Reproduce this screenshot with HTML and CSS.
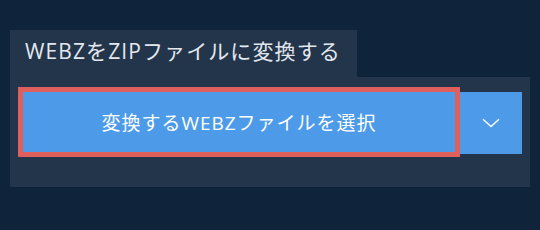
FILE: index.html
```html
<!DOCTYPE html>
<html lang="ja">
<head>
  <meta charset="UTF-8">
  <meta name="viewport" content="width=device-width, initial-scale=1.0">
  <title>WEBZをZIPファイルに変換する</title>
  <link rel="stylesheet" href="styles.css">
</head>
<body>
  <div class="converter">
    <div class="tab">WEBZをZIPファイルに変換する</div>
    <div class="panel">
      <div class="pick-row">
        <button class="pick-btn">変換するWEBZファイルを選択</button>
        <button class="more-btn" aria-label="その他">
          <svg width="18" height="10" viewBox="0 0 18 10">
            <path d="M1 1.2 L9 8.6 L17 1.2" fill="none" stroke="#fff" stroke-width="1.4"/>
          </svg>
        </button>
      </div>
    </div>
  </div>
</body>
</html>
```

FILE: styles.css
```css
body {
  margin: 0;
  background: #0f233a;
  font-family: "Open Sans", "Noto Sans CJK JP", sans-serif;
}
.converter {
  padding: 30px 10px 0 10px;
  width: 520px;
}
.tab {
  display: inline-block;
  background: #22354b;
  color: #e3e8ee;
  font-size: 21px;
  letter-spacing: 1.1px;
  height: 47px;
  line-height: 43px;
  padding: 0 14px 0 15px;
  box-sizing: border-box;
  width: 347px;
  white-space: nowrap;
}
.panel {
  background: #22354b;
  padding: 10px 8px 30px 8px;
}
.pick-row {
  display: flex;
  align-items: flex-start;
}
.pick-btn {
  width: 442px;
  height: 70px;
  border: 5px solid #df5f5c;
  background: #4d9be8;
  color: #fff;
  font-family: inherit;
  font-size: 19px;
  letter-spacing: 1px;
  padding: 0;
  cursor: pointer;
}
.more-btn {
  width: 62px;
  height: 62px;
  margin-top: 5px;
  border: none;
  background: #4d9be8;
  display: flex;
  align-items: center;
  justify-content: center;
  padding: 0;
  cursor: pointer;
}
```
